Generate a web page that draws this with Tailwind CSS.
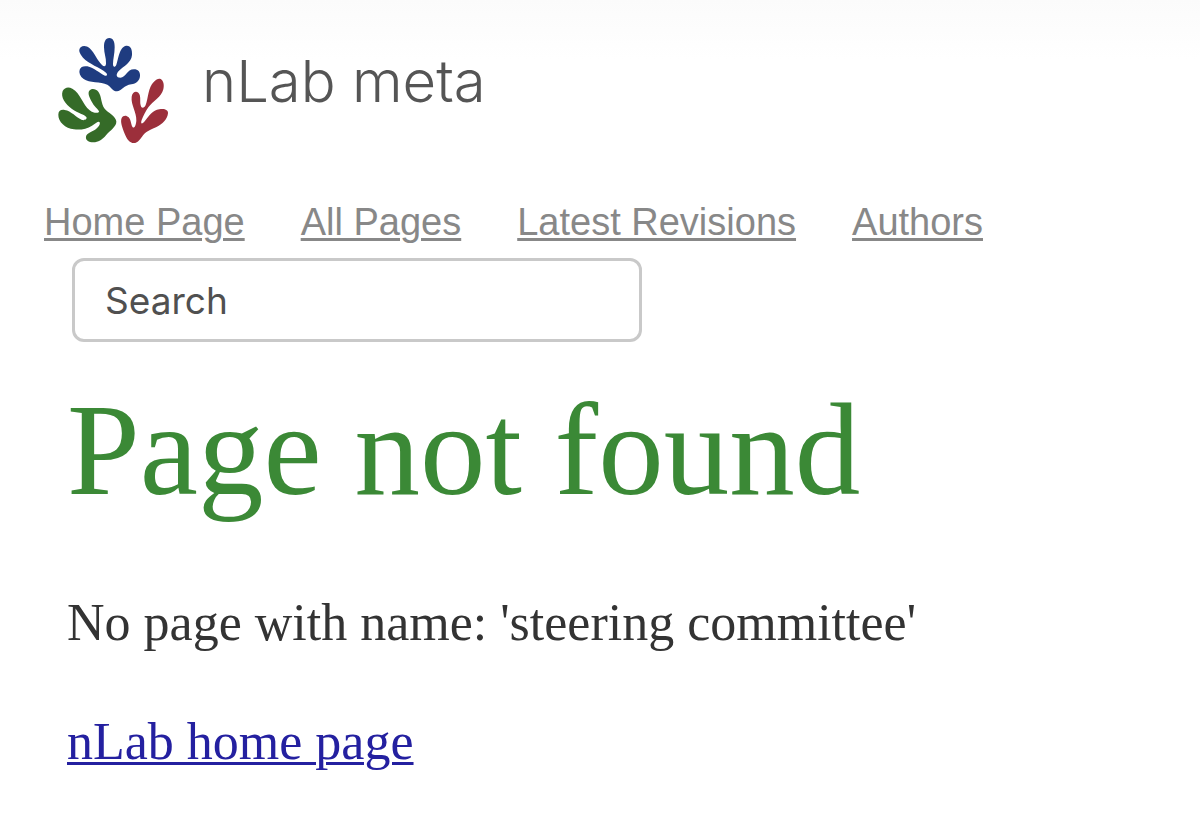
<!DOCTYPE html>
<html lang="en">
  <head>
    <meta charset="UTF-8" />
    <meta name="viewport" content="width=device-width, initial-scale=1.0" />
    <title>Page not found in nLab meta</title>
    <script src="https://cdn.jsdelivr.net/npm/@tailwindcss/browser@4"></script>
  </head>
  <body class="min-h-screen bg-white bg-linear-to-b from-[#fbfbfb] to-white to-[60px] pb-10 font-['Liberation_Serif',serif] text-[#333]">
    <header class="pt-[30px]">
      <div class="flex items-start gap-[22px] pl-[50px]">
        <!-- Logo -->
        <svg class="h-[120px] w-[130px] shrink-0" viewBox="0 0 390 360" aria-hidden="true">
          <path fill="#1f3c80" d="M178 24C190 24 194 36 194 52C194 72 189 88 189 102C189 112 195 113 199 104C205 90 207 50 229 47C243 46 247 60 246 75C244 98 222 108 207 122C196 133 199 143 211 143C228 143 230 118 252 118C264 118 271 126 270 138C269 152 258 161 244 163C222 165 214 184 201 184C188 184 184 171 172 164C152 154 118 160 101 147C90 139 86 128 89 119C92 110 101 107 112 109C132 113 150 131 165 137C172 139 173 133 168 128C150 112 116 102 99 83C88 70 84 60 92 52C99 46 110 47 119 55C135 70 141 91 156 105C163 112 168 109 168 100C169 84 162 70 162 52C162 36 166 24 178 24Z" />
          <path fill="#356b28" d="M38 183C44 172 55 169 67 176C92 190 98 224 119 241C129 249 141 250 146 247C152 243 134 232 127 218C119 204 112 190 118 182C124 174 138 176 145 185C156 200 152 220 164 236C174 248 197 258 199 274C200 290 182 300 168 316C156 330 145 337 130 337C116 337 106 330 108 320C110 310 122 307 134 300C143 295 152 284 149 277C146 271 138 280 126 287C110 296 92 301 72 298C46 295 24 275 25 254C25 243 32 238 44 240C64 243 78 262 96 270C105 272 112 267 109 261C104 254 84 250 66 237C46 222 31 202 38 183Z" />
          <path fill="#9c2f3b" d="M332 147C341 152 343 166 340 178C334 202 310 212 295 232C287 243 280 258 275 270C271 282 276 284 284 274C297 258 308 240 328 238C344 235 355 240 354 250C352 268 338 282 318 292C298 301 286 306 276 320C268 331 262 339 252 339C238 339 230 326 224 311C217 293 210 275 215 264C219 256 229 255 236 262C244 271 243 286 248 292C254 296 258 284 259 272C260 246 242 224 245 200C247 187 257 182 265 188C274 196 269 214 272 226C275 238 283 234 287 225C295 205 294 172 312 155C319 148 326 144 332 147Z" />
        </svg>
        <p class="pt-4 font-['Inter',sans-serif] text-[58px] leading-[70px] font-light text-[#555]">nLab meta</p>
      </div>

      <nav class="mt-[50px] flex flex-wrap gap-x-14 pl-11 font-['Liberation_Sans',sans-serif] text-[38px] leading-[44px] text-[#888]">
        <a href="#" class="underline decoration-3 underline-offset-3">Home Page</a>
        <a href="#" class="underline decoration-3 underline-offset-3">All Pages</a>
        <a href="#" class="underline decoration-3 underline-offset-3">Latest Revisions</a>
        <a href="#" class="underline decoration-3 underline-offset-3">Authors</a>
      </nav>

      <form class="mt-3.5 px-[72px]" role="search">
        <input
          type="text"
          id="query"
          aria-label="Search"
          placeholder="Search"
          class="block h-[84px] w-full max-w-[570px] rounded-xl border-3 border-[#c9c9c9] bg-white px-[30px] font-['Inter',sans-serif] text-[37px] placeholder:text-[#505050]"
        />
      </form>
    </header>

    <main class="px-[67px]">
      <h1 class="mt-9 text-[131px] leading-[144px] text-[#3b8936]">Page not found</h1>
      <p class="mt-[70px] text-[52px] leading-[62px]">No page with name: 'steering committee'</p>
      <p class="mt-[58px] text-[52px] leading-[60px]">
        <a href="#" class="text-[#2420a0] underline decoration-3 underline-offset-3">nLab home page</a>
      </p>
    </main>
  </body>
</html>
